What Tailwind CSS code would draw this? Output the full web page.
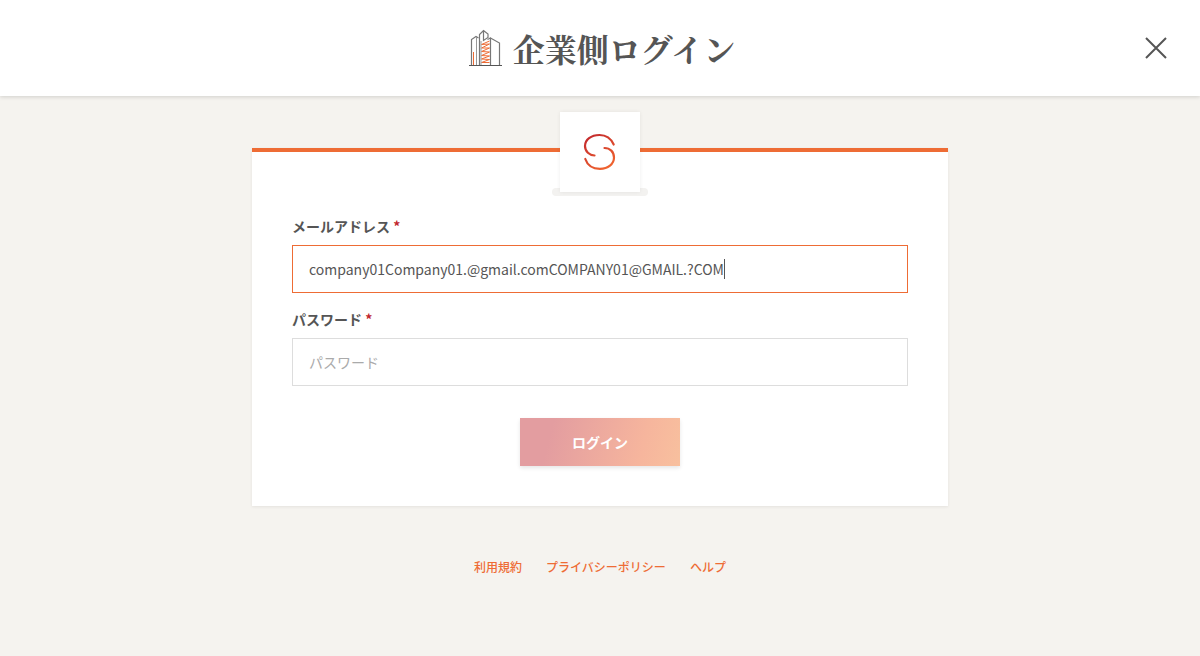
<!DOCTYPE html>
<html lang="ja">
<head>
<meta charset="utf-8">
<meta name="viewport" content="width=device-width, initial-scale=1">
<title>企業側ログイン</title>
<script src="https://cdn.jsdelivr.net/npm/@tailwindcss/browser@4"></script>
</head>
<body class="min-h-screen bg-[#f5f3ef] font-['Noto_Sans_CJK_JP',sans-serif] text-sm text-[#555]">
<header class="relative flex h-24 items-center justify-center bg-white shadow-[0_1px_4px_rgba(0,0,0,0.15)]">
  <div class="flex items-center gap-2">
    <svg class="size-10" viewBox="1 0 40 40" fill="none" aria-hidden="true">
      <g stroke="#ee6c35" stroke-width="1">
        <path d="M9.500 24V37"/>
        <path d="M25.500 13L17.500 16.500L25.500 16L17.500 20L25.500 20L17.500 23.500L25.500 24L17.500 27.500L25.500 28L17.500 31L25.500 31.500L17.500 34.500H25.500"/>
      </g>
      <path d="M5 37.500H38" stroke="#555"/>
      <g stroke="#777" stroke-width="1.200">
        <path d="M7.500 37V11.500L12 8.500L14.500 10"/>
        <path d="M15.500 37V6.500L19.500 2.500L24 6V9.500L19.500 12.500V3"/>
        <path d="M26.500 37V10L35.500 15V37"/>
        <path d="M23.500 11.500L26.500 10"/>
      </g>
      <path d="M12.500 9V37M17 13V37" stroke="#999"/>
    </svg>
    <h1 class="font-['Noto_Serif_CJK_JP','Noto_Serif_JP','Noto_Sans_CJK_JP',serif] text-[32px] leading-10 font-bold">企業側ログイン</h1>
  </div>
  <button type="button" aria-label="閉じる" class="absolute right-8 flex size-6 items-center justify-center">
    <svg class="size-6" viewBox="0 0 24 24" fill="none" stroke="#555" stroke-width="2" aria-hidden="true"><path d="M2 2L22 22M22 2L2 22"/></svg>
  </button>
</header>
<main class="px-6 pt-13">
  <form class="relative mx-auto max-w-[696px] border-t-4 border-[#ee6c35] bg-white px-10 pt-16 pb-10 shadow-[0_1px_3px_rgba(0,0,0,0.07)]">
    <div class="absolute -top-10 left-1/2 w-24 -translate-x-1/2">
      <div class="absolute bottom-[-4px] h-2 w-24 rounded-full bg-[#f3f2f0]"></div>
      <div class="relative mx-auto flex size-20 items-center justify-center bg-white shadow-[0_0_4px_rgba(0,0,0,0.07)]">
        <svg class="size-10" viewBox="0 0 40 40" fill="none" aria-hidden="true">
          <defs><linearGradient id="mark" x1="8" y1="2" x2="31" y2="38" gradientUnits="userSpaceOnUse"><stop stop-color="#c1272d"/><stop offset="1" stop-color="#f4692f"/></linearGradient></defs>
          <path d="M33.700 12.500C31 6.500 25.500 3 19.500 3C11 3 5 7.700 5 14C5 19.500 9.500 23.300 14.500 23.500M24.500 16C30 16 34 19.800 34 25.500C34 32 28 36.800 20 36.800C13 36.800 7.500 33.500 5.300 27" stroke="url(#mark)" stroke-width="2.200" stroke-linecap="round"/>
        </svg>
      </div>
    </div>
    <label for="email" class="block leading-[21px] font-bold">メールアドレス <span class="text-[#c1272d]">*</span></label>
    <div class="relative mt-2">
      <input id="email" type="text" value="company01Company01.@gmail.comCOMPANY01@GMAIL.?COM" class="block h-12 w-full border border-[#ee6c35] bg-white px-4 text-sm outline-none caret-transparent">
      <span class="absolute top-3.5 left-[432px] h-5 w-px bg-[#555]" aria-hidden="true"></span>
    </div>
    <label for="password" class="mt-4 block leading-[21px] font-bold">パスワード <span class="text-[#c1272d]">*</span></label>
    <input id="password" type="password" placeholder="パスワード" class="mt-2 block h-12 w-full border border-[#ddd] bg-white px-4 text-sm outline-none placeholder:text-[#aaa]">
    <button type="submit" class="mx-auto mt-8 block h-12 w-40 bg-linear-[105deg,#e39da0_20%,#f6b59d_75%,#f8c09e] font-bold text-white shadow-[0_2px_4px_rgba(0,0,0,0.1)]">ログイン</button>
  </form>
  <nav class="mt-13 flex justify-center gap-6 text-xs leading-[18px] font-medium text-[#ee6c35]">
    <a href="#terms">利用規約</a>
    <a href="#privacy">プライバシーポリシー</a>
    <a href="#help">ヘルプ</a>
  </nav>
</main>
</body>
</html>
